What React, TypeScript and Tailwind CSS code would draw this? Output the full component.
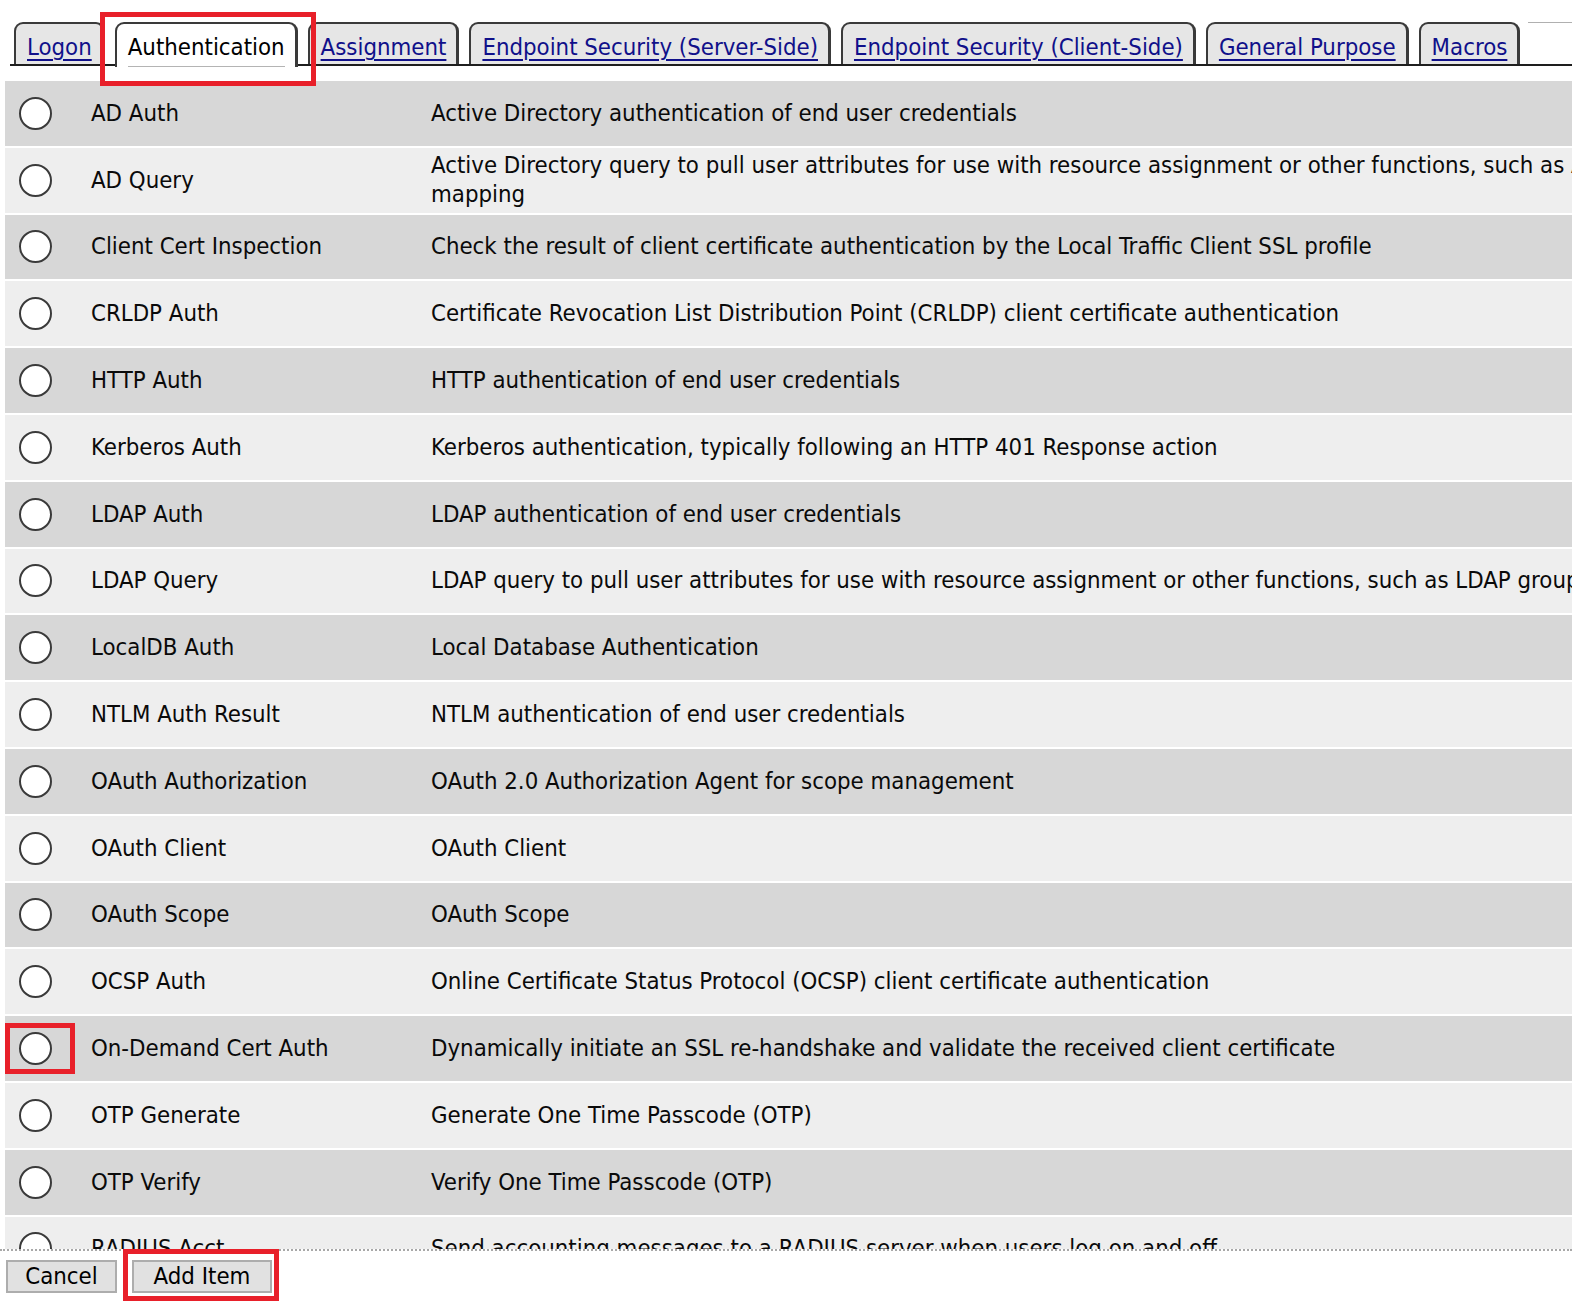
import React from "react";

const font = {
  fontFamily: "'DejaVu Sans Condensed', 'DejaVu Sans', 'Liberation Sans', sans-serif",
};

const tabs = [
  { label: "Logon", active: false },
  { label: "Authentication", active: true },
  { label: "Assignment", active: false },
  { label: "Endpoint Security (Server-Side)", active: false },
  { label: "Endpoint Security (Client-Side)", active: false },
  { label: "General Purpose", active: false },
  { label: "Macros", active: false },
];

const rows: { name: string; desc: React.ReactNode }[] = [
  { name: "AD Auth", desc: "Active Directory authentication of end user credentials" },
  {
    name: "AD Query",
    desc: (
      <>
        Active Directory query to pull user attributes for use with resource assignment or other functions, such as AD group
        <br />
        mapping
      </>
    ),
  },
  { name: "Client Cert Inspection", desc: "Check the result of client certificate authentication by the Local Traffic Client SSL profile" },
  { name: "CRLDP Auth", desc: "Certificate Revocation List Distribution Point (CRLDP) client certificate authentication" },
  { name: "HTTP Auth", desc: "HTTP authentication of end user credentials" },
  { name: "Kerberos Auth", desc: "Kerberos authentication, typically following an HTTP 401 Response action" },
  { name: "LDAP Auth", desc: "LDAP authentication of end user credentials" },
  { name: "LDAP Query", desc: "LDAP query to pull user attributes for use with resource assignment or other functions, such as LDAP group mapping" },
  { name: "LocalDB Auth", desc: "Local Database Authentication" },
  { name: "NTLM Auth Result", desc: "NTLM authentication of end user credentials" },
  { name: "OAuth Authorization", desc: "OAuth 2.0 Authorization Agent for scope management" },
  { name: "OAuth Client", desc: "OAuth Client" },
  { name: "OAuth Scope", desc: "OAuth Scope" },
  { name: "OCSP Auth", desc: "Online Certificate Status Protocol (OCSP) client certificate authentication" },
  { name: "On-Demand Cert Auth", desc: "Dynamically initiate an SSL re-handshake and validate the received client certificate" },
  { name: "OTP Generate", desc: "Generate One Time Passcode (OTP)" },
  { name: "OTP Verify", desc: "Verify One Time Passcode (OTP)" },
  { name: "RADIUS Acct", desc: "Send accounting messages to a RADIUS server when users log on and off" },
];

function Tab({ label, active }: { label: string; active: boolean }) {
  return (
    <div
      className={
        "relative flex h-[42px] items-start whitespace-nowrap rounded-t-[9px] border-2 border-r-[3px] border-b-0 border-[#3a3a3a] pl-[11px] pr-[10px] pt-[9px] " +
        (active ? "z-10 -mb-[3px] h-[45px] bg-white" : "bg-[#e6e6e6]")
      }
    >
      {active ? (
        <span className="relative text-[23.75px] leading-[28px] text-black">
          {label}
          <span className="absolute -bottom-[6px] left-0 right-0 h-[1px] bg-[#b4b4b4]" />
        </span>
      ) : (
        <a href="#" className="text-[23.75px] leading-[28px] text-[#10108a] underline decoration-[2px] underline-offset-[4px]">
          {label}
        </a>
      )}
    </div>
  );
}

function Radio() {
  return <span className="block h-[33px] w-[33px] rounded-full border-2 border-[#3a3a3a] bg-white" />;
}

export default function App() {
  return (
    <div className="relative h-[1308px] w-[1572px] overflow-hidden bg-white text-[#0a0a0a] font-stretch-condensed" style={font}>
      {/* tab bar */}
      <div className="flex flex-col pt-[22px]">
        <div className="relative flex items-end pl-[14px]">
          <div className="flex items-end gap-[10px]">
            {tabs.map((t) => (
              <Tab key={t.label} label={t.label} active={t.active} />
            ))}
          </div>
          <div className="ml-[8px] h-[42px] flex-1 border-t border-[#b0b0b0]" />
        </div>
        <div className="ml-[10px] h-[2px] bg-[#1e1e1e]" />
      </div>

      {/* list */}
      <div className="mt-[15px] h-[1170px] overflow-hidden border-b-2 border-dotted border-[#a8a8a8] pl-[5px]">
        <div className="flex w-[1900px] flex-col gap-[2px]">
          {rows.map((r, i) => (
            <div
              key={r.name}
              className={"flex h-[64.8px] items-center " + (i % 2 === 0 ? "bg-[#d7d7d7]" : "bg-[#eeeeee]")}
            >
              <div className="flex w-[86px] shrink-0 items-center pl-[14px]">
                <Radio />
              </div>
              <div className="w-[340px] shrink-0 whitespace-nowrap text-[23.75px] leading-[29px]">{r.name}</div>
              <div className="whitespace-nowrap text-[23.75px] leading-[29px]">{r.desc}</div>
            </div>
          ))}
        </div>
      </div>

      {/* buttons */}
      <div className="flex gap-[15px] pl-[6px] pt-[9px]">
        <button className="flex h-[33px] w-[111px] items-center justify-center border-2 border-[#adadad] bg-[#e1e1e1] text-[23.75px] leading-none text-black">
          Cancel
        </button>
        <button className="flex h-[33px] w-[140px] items-center justify-center border-2 border-[#adadad] bg-[#e1e1e1] text-[23.75px] leading-none text-black">
          Add Item
        </button>
      </div>

      {/* annotation boxes */}
      <div className="pointer-events-none absolute left-[100px] top-[12px] h-[74px] w-[216px] border-[5px] border-[#e8202a]" />
      <div className="pointer-events-none absolute left-[5px] top-[1023px] h-[51px] w-[70px] border-[5px] border-[#e8202a]" />
      <div className="pointer-events-none absolute left-[123px] top-[1249px] h-[52px] w-[156px] border-[5px] border-[#e8202a]" />
    </div>
  );
}
